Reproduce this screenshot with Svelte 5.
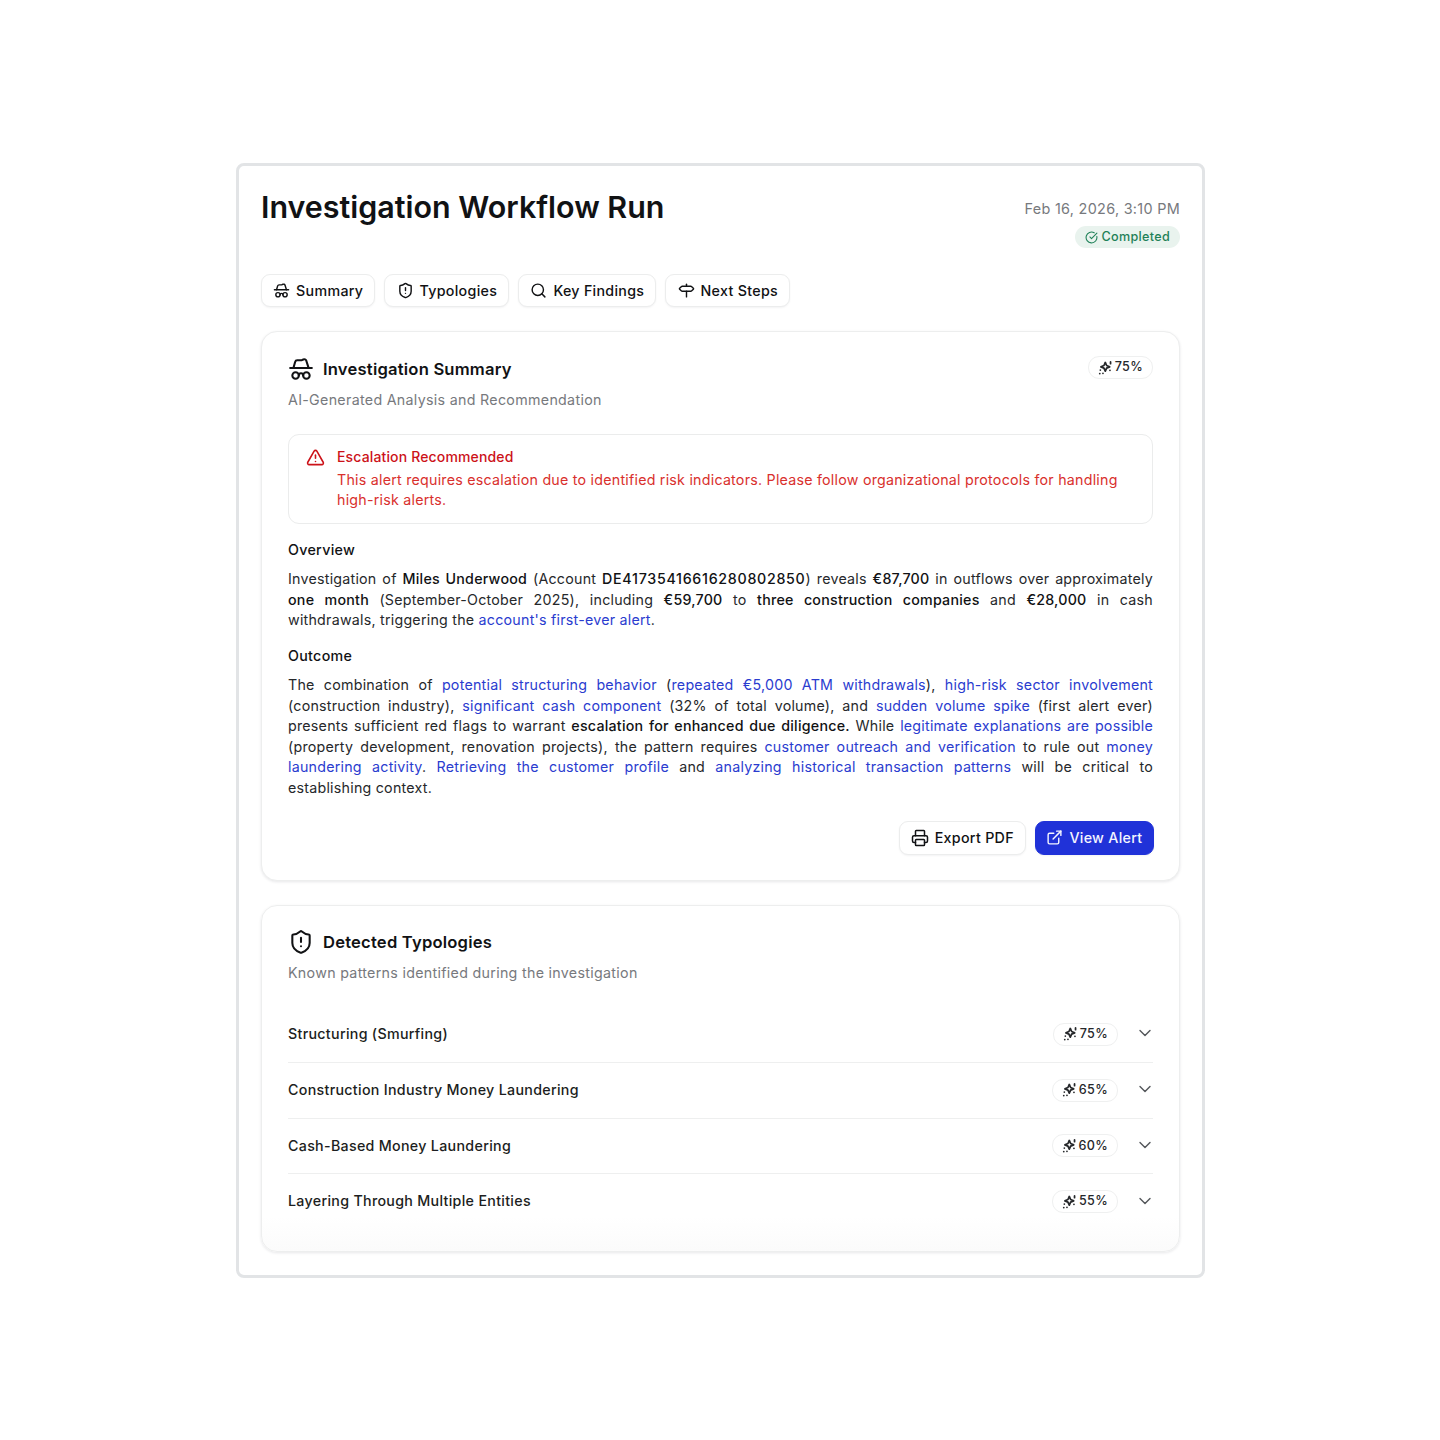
<script lang="ts">
	const tabs = [
		{ label: 'Summary', icon: 'hat' },
		{ label: 'Typologies', icon: 'shield' },
		{ label: 'Key Findings', icon: 'search' },
		{ label: 'Next Steps', icon: 'signpost' }
	];

	const typologies = [
		{ name: 'Structuring (Smurfing)', score: 75 },
		{ name: 'Construction Industry Money Laundering', score: 65 },
		{ name: 'Cash-Based Money Laundering', score: 60 },
		{ name: 'Layering Through Multiple Entities', score: 55 }
	];
</script>

{#snippet icon(name: string, size: number, width = 2)}
	<svg
		class="icon"
		viewBox="0 0 24 24"
		width={size}
		height={size}
		fill="none"
		stroke="currentColor"
		stroke-width={width}
		stroke-linecap="round"
		stroke-linejoin="round"
	>
		{#if name === 'hat'}
			<path d="M14 18a2 2 0 0 0-4 0" />
			<path d="m19 11-2.11-6.657a2 2 0 0 0-2.752-1.148l-1.276.61A2 2 0 0 1 12 4H8.5a2 2 0 0 0-1.925 1.456L5 11" />
			<path d="M2 11h20" />
			<circle cx="17" cy="18" r="3" />
			<circle cx="7" cy="18" r="3" />
		{:else if name === 'shield'}
			<path d="M20 13c0 5-3.5 7.5-7.66 8.95a1 1 0 0 1-.67-.01C7.5 20.5 4 18 4 13V6a1 1 0 0 1 1-1c2 0 4.5-1.2 6.24-2.72a1.17 1.17 0 0 1 1.52 0C14.51 3.81 17 5 19 5a1 1 0 0 1 1 1z" />
			<path d="M12 8v4" />
			<path d="M12 16h.01" />
		{:else if name === 'search'}
			<path d="m21 21-4.34-4.34" />
			<circle cx="11" cy="11" r="8" />
		{:else if name === 'signpost'}
			<path d="M12 13v8" />
			<path d="M12 3v3" />
			<path d="M18 6a2 2 0 0 1 1.387.56l2.307 2.22a1 1 0 0 1 0 1.44l-2.307 2.22A2 2 0 0 1 18 13H6a2 2 0 0 1-1.387-.56l-2.307-2.22a1 1 0 0 1 0-1.44l2.307-2.22A2 2 0 0 1 6 6z" />
		{:else if name === 'check'}
			<path d="M21.8 10A10 10 0 1 1 17 3.34" />
			<path d="m9 11 3 3L22 4" />
		{:else if name === 'alert'}
			<path d="m21.73 18-8-14a2 2 0 0 0-3.48 0l-8 14A2 2 0 0 0 4 21h16a2 2 0 0 0 1.73-3" />
			<path d="M12 9v4" />
			<path d="M12 17h.01" />
		{:else if name === 'printer'}
			<path d="M6 18H4a2 2 0 0 1-2-2v-5a2 2 0 0 1 2-2h16a2 2 0 0 1 2 2v5a2 2 0 0 1-2 2h-2" />
			<path d="M6 9V3a1 1 0 0 1 1-1h10a1 1 0 0 1 1 1v6" />
			<rect x="6" y="14" width="12" height="8" rx="1" />
		{:else if name === 'external'}
			<path d="M15 3h6v6" />
			<path d="M10 14 21 3" />
			<path d="M18 13v6a2 2 0 0 1-2 2H5a2 2 0 0 1-2-2V8a2 2 0 0 1 2-2h6" />
		{:else if name === 'chevron'}
			<path d="m6 9 6 6 6-6" />
		{:else if name === 'sparkle'}
			<path d="M12.5 2.5 14.8 7.7 20 10 14.8 12.3 12.5 17.5 10.2 12.3 5 10 10.2 7.7z" />
			<path d="M21.5 1.5v3" />
			<path d="M20.5 16h.01" />
			<path d="M4 15.5h.01" />
			<path d="M8.5 21h.01" />
			<path d="M3 21.5h.01" />
		{/if}
	</svg>
{/snippet}

{#snippet score(value: number)}
	<span class="score">
		{@render icon('sparkle', 14, 3)}
		{value}%
	</span>
{/snippet}

<main class="run">
	<header class="run-head">
		<h1>Investigation Workflow Run</h1>
		<div class="run-meta">
			<span class="date">Feb 16, 2026, 3:10 PM</span>
			<span class="status">
				{@render icon('check', 13)}
				Completed
			</span>
		</div>
	</header>

	<nav class="tabs">
		{#each tabs as tab}
			<button class="btn">
				{@render icon(tab.icon, 17)}
				{tab.label}
			</button>
		{/each}
	</nav>

	<section class="card">
		<div class="card-head">
			<div>
				<h2>{@render icon('hat', 26, 1.9)} Investigation Summary</h2>
				<p class="sub">AI-Generated Analysis and Recommendation</p>
			</div>
			{@render score(75)}
		</div>

		<div class="alert">
			<span class="alert-icon">{@render icon('alert', 19)}</span>
			<div>
				<h3>Escalation Recommended</h3>
				<p>
					This alert requires escalation due to identified risk indicators. Please follow
					organizational protocols for handling high-risk alerts.
				</p>
			</div>
		</div>

		<h4>Overview</h4>
		<p class="body">
			Investigation of <b>Miles Underwood</b> (Account <b class="account">DE41735416616280802850</b>) reveals
			<b>€87,700</b> in outflows over approximately <b>one month</b> (September-October 2025),
			including <b>€59,700</b> to <b>three construction companies</b> and <b>€28,000</b> in cash
			withdrawals, triggering the <em>account's first-ever alert</em>.
		</p>

		<h4 class="second">Outcome</h4>
		<p class="body">
			The combination of <em>potential structuring behavior</em> (<em>repeated €5,000 ATM withdrawals</em>),
			<em>high-risk sector involvement</em> (construction industry), <em>significant cash component</em>
			(32% of total volume), and <em>sudden volume spike</em> (first alert ever) presents sufficient red
			flags to warrant <b>escalation for enhanced due diligence.</b> While
			<em>legitimate explanations are possible</em> (property development, renovation projects), the
			pattern requires <em>customer outreach and verification</em> to rule out
			<em>money laundering activity</em>. <em>Retrieving the customer profile</em> and
			<em>analyzing historical transaction patterns</em> will be critical to establishing context.
		</p>

		<div class="actions">
			<button class="btn">
				{@render icon('printer', 18)}
				Export PDF
			</button>
			<button class="btn primary">
				{@render icon('external', 17)}
				View Alert
			</button>
		</div>
	</section>

	<section class="card typologies">
		<h2>{@render icon('shield', 26, 1.9)} Detected Typologies</h2>
		<p class="sub">Known patterns identified during the investigation</p>

		<ul class="list">
			{#each typologies as item}
				<li>
					<span class="name">{item.name}</span>
					{@render score(item.score)}
					<span class="chevron">{@render icon('chevron', 20, 1.7)}</span>
				</li>
			{/each}
		</ul>
	</section>
</main>

<style>
	:global(body) {
		background: #fff;
	}

	.run {
		box-sizing: border-box;
		width: 969px;
		margin: 163px 0 0 236px;
		padding: 22px 22px 23px;
		border: 3px solid #e2e4e6;
		border-radius: 8px;
		background: #fff;
		color: #111214;
		font-family: Inter, 'Liberation Sans', sans-serif;
		font-size: 14.25px;
		letter-spacing: 0.23px;
		line-height: 20.5px;
	}

	.icon {
		flex: none;
		display: block;
	}

	.run-head {
		display: flex;
		justify-content: space-between;
		align-items: flex-start;
		height: 86px;
	}

	h1 {
		margin: 0;
		font-size: 30.45px;
		line-height: 38px;
		font-weight: 600;
		letter-spacing: 0;
	}

	.run-meta {
		display: flex;
		flex-direction: column;
		align-items: flex-end;
		gap: 7px;
		padding-top: 11px;
	}

	.date {
		color: #77797d;
		font-size: 14.4px;
		letter-spacing: 0.3px;
		line-height: 20px;
	}

	.status {
		display: flex;
		align-items: center;
		gap: 4px;
		height: 22px;
		padding: 0 10px;
		border-radius: 11px;
		background: #e9f3ee;
		color: #1f8158;
		font-size: 12.6px;
		letter-spacing: 0.3px;
		font-weight: 500;
	}

	.tabs {
		display: flex;
		gap: 9px;
		margin-bottom: 24px;
	}

	.tabs .btn {
		height: 33px;
		padding: 0 11.1px 1px;
	}

	.btn {
		display: flex;
		align-items: center;
		gap: 6px;
		box-sizing: border-box;
		height: 34px;
		padding: 0 11px 1px;
		border: 1px solid #eceded;
		border-radius: 9px;
		background: #fff;
		color: #111214;
		font: 500 14.25px Inter, 'Liberation Sans', sans-serif;
		letter-spacing: 0.3px;
		box-shadow: 0 1px 2px rgba(16, 24, 40, 0.05);
	}

	.btn.primary {
		padding: 0 10.5px 1px;
		border-color: #2032d8;
		background: #2032d8;
		color: #f4f5ff;
	}

	.card {
		box-sizing: border-box;
		padding: 24px 26px 25px;
		border: 1px solid #edeeee;
		border-radius: 16px;
		background: #fff;
		box-shadow: 0 1px 3px rgba(16, 24, 40, 0.1);
	}

	.card + .card {
		margin-top: 24px;
	}

	.card-head {
		display: flex;
		justify-content: space-between;
		align-items: flex-start;
	}

	h2 {
		display: flex;
		align-items: center;
		gap: 9px;
		height: 26px;
		margin: 0;
		font-size: 16.6px;
		letter-spacing: 0.2px;
		font-weight: 600;
	}

	.sub {
		margin: 7.5px 0 0;
		color: #77797d;
		letter-spacing: 0.3px;
		line-height: 20px;
	}

	.score {
		display: flex;
		align-items: center;
		gap: 3px;
		height: 21px;
		padding: 0 9px;
		border: 1px solid #eff0f0;
		border-radius: 11px;
		background: #fff;
		color: #26282b;
		font-size: 12.6px;
		letter-spacing: 0.3px;
		font-weight: 500;
	}

	.alert {
		display: flex;
		gap: 12px;
		margin-top: 24px;
		padding: 12px 18px 12px 17px;
		border: 1px solid #ebecec;
		border-radius: 11px;
		color: #d9302d;
	}

	.alert-icon {
		color: #cc1219;
		padding-top: 1px;
	}

	h3 {
		margin: 0 0 3px;
		color: #cc1219;
		font-size: 14px;
		letter-spacing: 0.15px;
		line-height: 20px;
		font-weight: 500;
	}

	.alert p {
		margin: 0;
	}

	h4 {
		margin: 16px 0 9.5px;
		font-size: 14.25px;
		letter-spacing: 0.3px;
		line-height: 20px;
		font-weight: 500;
	}

	h4.second {
		margin-top: 15px;
	}

	.body {
		margin: 0;
		text-align: justify;
		color: #26282b;
	}

	.body b {
		color: #111214;
		font-weight: 500;
	}

	.body b.account {
		letter-spacing: 0.7px;
	}

	.body em {
		color: #2a3ccf;
		font-style: normal;
	}

	.actions {
		display: flex;
		justify-content: flex-end;
		gap: 9px;
		margin: 23px -1px 0 0;
	}

	.typologies {
		padding-top: 23px;
		padding-bottom: 22.5px;
		background: linear-gradient(to bottom, #fff 90%, #fbfbfb);
	}

	.list {
		margin: 24px 0 0;
		padding: 0;
		list-style: none;
		letter-spacing: 0.3px;
	}

	.list li {
		display: flex;
		align-items: center;
		box-sizing: border-box;
		height: 55.6px;
		border-top: 1px solid #eeefef;
	}

	.list li:first-child {
		border-top: none;
	}

	.name {
		flex: 1;
		font-weight: 500;
		color: #1c1e21;
	}

	.chevron {
		margin: 0 -2px 2px 17px;
		color: #55585c;
	}
</style>
